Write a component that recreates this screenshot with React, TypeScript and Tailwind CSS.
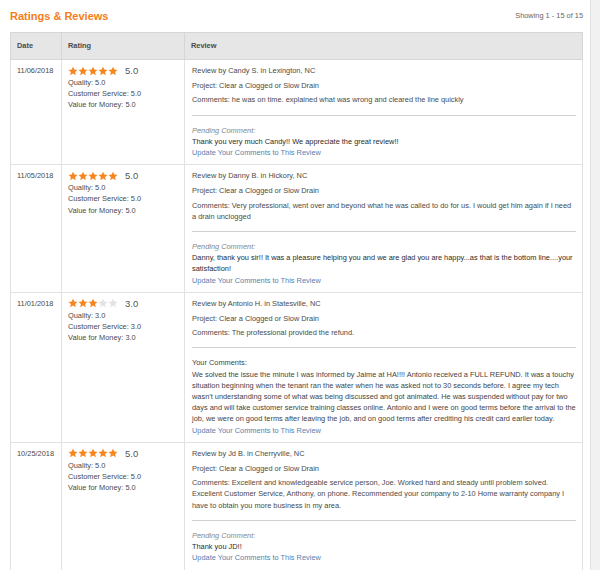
import React from 'react';

interface Review {
  date: string;
  rating: number;
  author: string;
  project: string;
  comments: string;
  replyLabel: string;
  pending: boolean;
  reply: string;
}

const reviews: Review[] = [
  {
    date: '11/06/2018',
    rating: 5,
    author: 'Candy S. in Lexington, NC',
    project: 'Clear a Clogged or Slow Drain',
    comments: 'he was on time. explained what was wrong and cleared the line quickly',
    replyLabel: 'Pending Comment:',
    pending: true,
    reply: 'Thank you very much Candy!! We appreciate the great review!!',
  },
  {
    date: '11/05/2018',
    rating: 5,
    author: 'Danny B. in Hickory, NC',
    project: 'Clear a Clogged or Slow Drain',
    comments:
      'Very professional, went over and beyond what he was called to do for us. I would get him again if I need a drain unclogged',
    replyLabel: 'Pending Comment:',
    pending: true,
    reply:
      'Danny, thank you sir!! It was a pleasure helping you and we are glad you are happy...as that is the bottom line....your satisfaction!',
  },
  {
    date: '11/01/2018',
    rating: 3,
    author: 'Antonio H. in Statesville, NC',
    project: 'Clear a Clogged or Slow Drain',
    comments: 'The professional provided the refund.',
    replyLabel: 'Your Comments:',
    pending: false,
    reply:
      "We solved the issue the minute I was informed by Jaime at HA!!!! Antonio received a FULL REFUND. It was a touchy situation beginning when the tenant ran the water when he was asked not to 30 seconds before. I agree my tech wasn't understanding some of what was being discussed and got animated. He was suspended without pay for two days and will take customer service training classes online. Antonio and I were on good terms before the arrival to the job, we were on good terms after leaving the job, and on good terms after crediting his credit card earlier today.",
  },
  {
    date: '10/25/2018',
    rating: 5,
    author: 'Jd B. in Cherryville, NC',
    project: 'Clear a Clogged or Slow Drain',
    comments:
      'Excellent and knowledgeable service person, Joe. Worked hard and steady until problem solved. Excellent Customer Service, Anthony, on phone. Recommended your company to 2-10 Home warranty company I have to obtain you more business in my area.',
    replyLabel: 'Pending Comment:',
    pending: true,
    reply: 'Thank you JD!!',
  },
];

const Star = ({ filled }: { filled: boolean }) => (
  <svg width="10" height="10" viewBox="0 0 24 24" className="block">
    <path
      d="M12 1.5l3.2 7 7.6.8-5.7 5.1 1.6 7.5L12 18l-6.7 3.9 1.6-7.5L1.2 9.3l7.6-.8z"
      fill={filled ? '#f7861e' : '#e3e3e3'}
    />
  </svg>
);

const Stars = ({ rating }: { rating: number }) => (
  <div className="flex items-center">
    {[1, 2, 3, 4, 5].map((i) => (
      <Star key={i} filled={i <= rating} />
    ))}
  </div>
);

export default function App() {
  return (
    <div
      className="flex w-[600px] min-h-[570px] bg-white text-[#4a4a4a]"
      style={{ fontFamily: '"Liberation Sans", Arial, sans-serif' }}
    >
      <div className="w-[590px] pl-[10px] pr-[7px]">
        <div className="flex items-center justify-between pt-[9px] mb-[9px]">
          <h1 className="text-[11px] leading-[14px] font-bold text-[#f47d20]">Ratings &amp; Reviews</h1>
          <span className="text-[7.4px] leading-[14px] text-[#666]">Showing 1 - 15 of 15</span>
        </div>

        <table className="w-[573px] table-fixed border-collapse border border-[#dcdcdc] text-[7.4px] leading-[11.2px]">
          <colgroup>
            <col className="w-[51px]" />
            <col className="w-[123px]" />
            <col />
          </colgroup>
          <thead>
            <tr className="bg-[#e6e6e6] h-[27px]">
              <th className="border border-[#d6d6d6] text-left font-bold text-[#4a4a4a] pl-[6px]">Date</th>
              <th className="border border-[#d6d6d6] text-left font-bold text-[#4a4a4a] pl-[6px]">Rating</th>
              <th className="border border-[#d6d6d6] text-left font-bold text-[#4a4a4a] pl-[6px]">Review</th>
            </tr>
          </thead>
          <tbody>
            {reviews.map((r) => (
              <tr key={r.date} className="align-top">
                <td className="border border-[#e2e2e2] pl-[6px] pt-[5px] pb-[6px]">
                  <div>{r.date}</div>
                </td>
                <td className="border border-[#e2e2e2] pl-[6px] pt-[5px] pb-[6px]">
                  <div className="flex items-center h-[11px] mb-[1px]">
                    <Stars rating={r.rating} />
                    <span className="ml-[7px] text-[9.5px] text-[#555]">{r.rating.toFixed(1)}</span>
                  </div>
                  <div>Quality: {r.rating.toFixed(1)}</div>
                  <div>Customer Service: {r.rating.toFixed(1)}</div>
                  <div>Value for Money: {r.rating.toFixed(1)}</div>
                </td>
                <td className="border border-[#e2e2e2] pl-[7px] pr-[6px] pt-[5px] pb-[6px]">
                  <p className="mb-[3.5px]">Review by {r.author}</p>
                  <p className="mb-[3.5px]">Project: {r.project}</p>
                  <p>Comments: {r.comments}</p>
                  <div className="border-t border-[#d0d0d0] mt-[9px] mb-[9px]" />
                  <p className={r.pending ? 'italic text-[#888]' : 'text-[#444]'}>{r.replyLabel}</p>
                  <p className={r.pending ? 'text-[#2b2b2b]' : 'text-[#444]'}>{r.reply}</p>
                  <a className="text-[#5a7eae] cursor-pointer">Update Your Comments to This Review</a>
                </td>
              </tr>
            ))}
          </tbody>
        </table>
      </div>
      <div className="flex-1 bg-[#f1f1f1] border-l border-[#e0e0e0]" />
    </div>
  );
}
